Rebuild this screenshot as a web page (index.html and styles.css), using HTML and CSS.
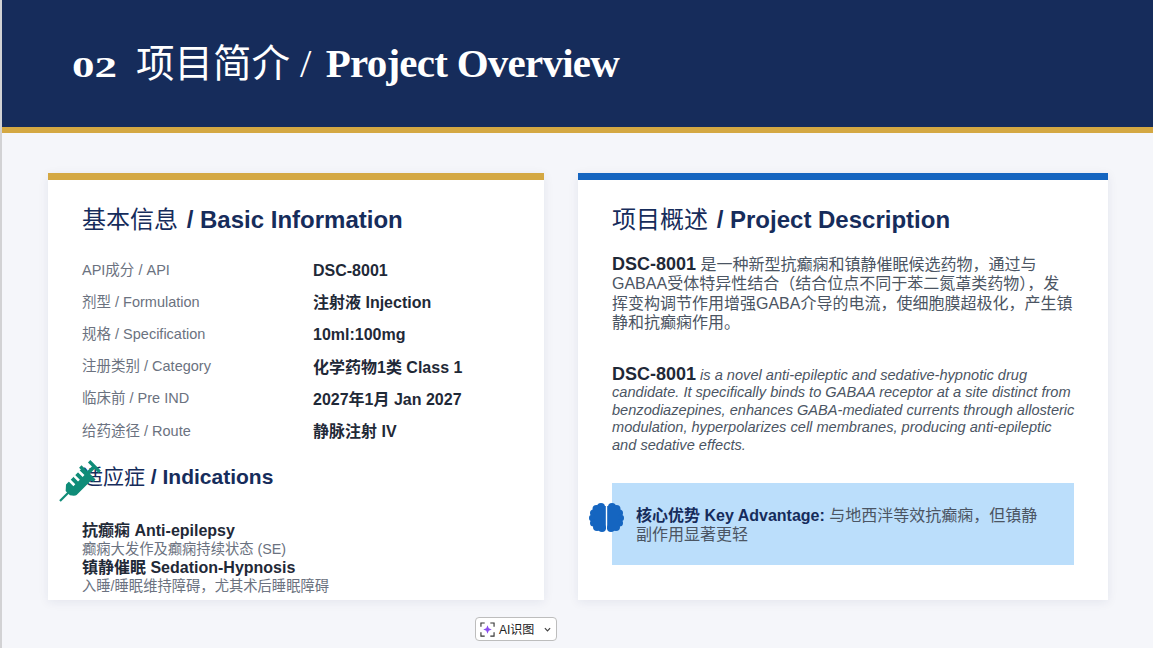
FILE: index.html
```html
<!DOCTYPE html>
<html lang="zh">
<head>
<meta charset="utf-8">
<title>Project Overview</title>
<link rel="stylesheet" href="styles.css">
</head>
<body>
<div class="slide">
  <header class="banner">
    <h1 class="banner-title"><span class="num">02</span><span class="zh-head">项目简介</span><span class="slash">/</span>Project Overview</h1>
  </header>
  <main class="columns">
    <section class="card card-gold">
      <h2 class="card-title">基本信息 <b>/ Basic Information</b></h2>
      <dl class="facts">
        <dt>API成分 / API</dt><dd>DSC-8001</dd>
        <dt>剂型 / Formulation</dt><dd>注射液 Injection</dd>
        <dt>规格 / Specification</dt><dd>10ml:100mg</dd>
        <dt>注册类别 / Category</dt><dd>化学药物1类 Class 1</dd>
        <dt>临床前 / Pre IND</dt><dd>2027年1月 Jan 2027</dd>
        <dt>给药途径 / Route</dt><dd>静脉注射 IV</dd>
      </dl>
      <div class="indications">
        <h2 class="card-title sub-title">适应症 <b>/ Indications</b></h2>
        <svg class="syringe" viewBox="0 0 52 50" aria-hidden="true">
          <g transform="translate(5 45) rotate(-45)" fill="#0f8c78">
            <rect x="0" y="-1.100" width="13" height="2.200"/>
            <path d="M11 -3 L16 -7.500 H39 V7.500 H16 Q14 7.500 11 3 Z"/>
            <rect x="38" y="-1.800" width="11" height="3.600"/>
            <rect x="37" y="-10" width="3.400" height="20"/>
            <rect x="47" y="-7.500" width="3.400" height="15"/>
            <path d="M20 -8 h2.600 v7 h-2.600 Z M26.500 -8 h2.600 v7 h-2.600 Z M33 -8 h2.600 v7 h-2.600 Z" fill="#fff"/>
          </g>
        </svg>
        <p class="ind-name">抗癫痫 Anti-epilepsy</p>
        <p class="ind-note">癫痫大发作及癫痫持续状态 (SE)</p>
        <p class="ind-name">镇静催眠 Sedation-Hypnosis</p>
        <p class="ind-note">入睡/睡眠维持障碍，尤其术后睡眠障碍</p>
      </div>
    </section>
    <section class="card card-blue">
      <h2 class="card-title">项目概述 <b>/ Project Description</b></h2>
      <p class="para para-zh"><strong>DSC-8001</strong> 是一种新型抗癫痫和镇静催眠候选药物，通过与GABAA受体特异性结合（结合位点不同于苯二氮䓬类药物），发挥变构调节作用增强GABA介导的电流，使细胞膜超极化，产生镇静和抗癫痫作用。</p>
      <p class="para para-en"><strong>DSC-8001</strong> <em>is a novel anti-epileptic and sedative-hypnotic drug candidate. It specifically binds to GABAA receptor at a site distinct from benzodiazepines, enhances GABA-mediated currents through allosteric modulation, hyperpolarizes cell membranes, producing anti-epileptic<br>and sedative effects.</em></p>
      <div class="advantage">
        <svg class="brain" viewBox="0 0 35 29" aria-hidden="true">
          <g fill="#1565c0">
            <circle cx="12" cy="4" r="4"/>
            <circle cx="7.500" cy="6" r="4"/>
            <circle cx="4.500" cy="10" r="3.500"/>
            <circle cx="3.300" cy="15" r="3.300"/>
            <circle cx="4.500" cy="20" r="3.500"/>
            <circle cx="8" cy="24" r="4"/>
            <circle cx="13" cy="25" r="4"/>
            <rect x="6" y="3" width="10.800" height="23"/>
          </g>
          <g fill="#1565c0" transform="translate(35 0) scale(-1 1)">
            <circle cx="12" cy="4" r="4"/>
            <circle cx="7.500" cy="6" r="4"/>
            <circle cx="4.500" cy="10" r="3.500"/>
            <circle cx="3.300" cy="15" r="3.300"/>
            <circle cx="4.500" cy="20" r="3.500"/>
            <circle cx="8" cy="24" r="4"/>
            <circle cx="13" cy="25" r="4"/>
            <rect x="6" y="3" width="10.800" height="23"/>
          </g>
        </svg>
        <p class="adv-text"><strong>核心优势 Key Advantage:</strong> 与地西泮等效抗癫痫，但镇静副作用显著更轻</p>
      </div>
    </section>
  </main>
  <div class="chip-row">
    <div class="chip">
      <svg class="chip-icon" viewBox="0 0 16 16" aria-hidden="true">
        <path d="M1 5V1H5M11 1H15V5M15 11V15H11M5 15H1V11" fill="none" stroke="#333" stroke-width="1.200"/>
        <path d="M8 3.500 L9.300 6.700 L12.500 8 L9.300 9.300 L8 12.500 L6.700 9.300 L3.500 8 L6.700 6.700 Z" fill="#8a4df0"/>
      </svg>
      <span class="chip-label">AI识图</span>
      <svg class="chip-caret" viewBox="0 0 8 5" aria-hidden="true"><path d="M1 1 L4 4 L7 1" fill="none" stroke="#444" stroke-width="1.400"/></svg>
    </div>
  </div>
</div>
</body>
</html>
```
FILE: styles.css
```css
* { box-sizing: border-box; }
html, body { margin: 0; padding: 0; }
body {
  width: 1153px;
  height: 648px;
  overflow: hidden;
  background: #f5f6fa;
  font-family: "Liberation Sans", "Noto Sans CJK SC", sans-serif;
}
.slide {
  height: 648px;
  border-left: 2px solid #d2d2d4;
  display: flex;
  flex-direction: column;
}
.banner {
  height: 133px;
  flex: none;
  background: #162c5b;
  border-bottom: 6px solid #d4a843;
  padding: 2px 0 0 70px;
  display: flex;
  align-items: center;
}
.banner-title {
  margin: 0;
  color: #fff;
  font-family: "Liberation Serif", "Noto Sans CJK SC", serif;
  font-size: 41px;
  line-height: 48px;
  font-weight: 700;
  letter-spacing: -0.75px;
  white-space: nowrap;
}
.num {
  display: inline-block;
  width: 64px;
  font-size: 30px;
  letter-spacing: 0;
  transform: scaleX(1.5);
  transform-origin: left center;
}
.zh-head { font-size: 38.500px; font-weight: 400; letter-spacing: 0; }
.slash { font-weight: 400; margin: 0 15px 0 10px; }
.columns {
  flex: none;
  height: 427px;
  margin: 40px 0 0 46px;
  display: flex;
  gap: 34px;
}
.card {
  background: #fff;
  padding: 28px 34px 0;
  box-shadow: 0 2px 10px rgba(22, 44, 91, 0.08);
  overflow: hidden;
  position: relative;
}
.card-gold { width: 496px; border-top: 7px solid #d4a843; }
.card-blue { width: 530px; border-top: 7px solid #1565c0; overflow: visible; }
.card-title {
  margin: 0;
  color: #162c5b;
  font-size: 24px;
  line-height: 24px;
  font-weight: 400;
  white-space: nowrap;
}
.card-title b { font-weight: 700; margin-left: 2px; }
.facts {
  margin: 22px 0 0;
  display: grid;
  grid-template-columns: 231px 1fr;
  grid-auto-rows: 32.200px;
  align-items: center;
  font-size: 14.500px;
}
.facts dt, .facts dd { line-height: 20px; }
.facts dt { color: #6b7280; margin-top: -1px; }
.facts dd { margin: 2px 0 0; color: #1f2937; font-size: 16px; font-weight: 700; }
.indications { position: relative; margin-top: 18px; }
.syringe {
  position: absolute;
  left: -27px;
  top: -9px;
  width: 52px;
  height: 50px;
}
.sub-title { font-size: 21px; }
.sub-title b { margin-left: 0; }
.ind-name, .ind-note { margin: 0; line-height: 18.300px; white-space: nowrap; }
.sub-title + .syringe + .ind-name { margin-top: 33px; }
.ind-name { color: #1f2937; font-size: 16px; font-weight: 700; }
.ind-note { color: #6b7280; font-size: 14.300px; }
.para { margin: 0; color: #4b5563; width: 462px; }
.para strong { color: #1f2937; font-size: 18px; line-height: 1; }
.para-zh { margin-top: 23px; font-size: 16px; line-height: 19.400px; }
.para-en { width: 470px; margin-top: 32px; font-size: 14.600px; line-height: 17.500px; }
.advantage {
  position: relative;
  margin-top: 29px;
  width: 462px;
  height: 82px;
  background: #bbdefb;
  padding: 23px 24px 0;
}
.brain {
  position: absolute;
  left: -23px;
  top: 20px;
  width: 35px;
  height: 29px;
}
.adv-text { margin: 0; color: #4b5563; font-size: 16px; line-height: 19px; }
.adv-text strong { color: #162c5b; }
.chip-row { flex: 1; display: flex; align-items: flex-start; padding: 17px 0 0 473px; }
.chip {
  width: 82px;
  height: 24px;
  background: #fff;
  border: 1px solid #bdbdbd;
  border-radius: 4px;
  display: flex;
  align-items: center;
  padding: 0 5px 0 4px;
  gap: 4px;
}
.chip-icon { width: 15px; height: 15px; flex: none; }
.chip-label { font-size: 12px; color: #222; white-space: nowrap; margin-top: -2px; }
.chip-caret { width: 7px; height: 5px; margin-left: auto; }
```
